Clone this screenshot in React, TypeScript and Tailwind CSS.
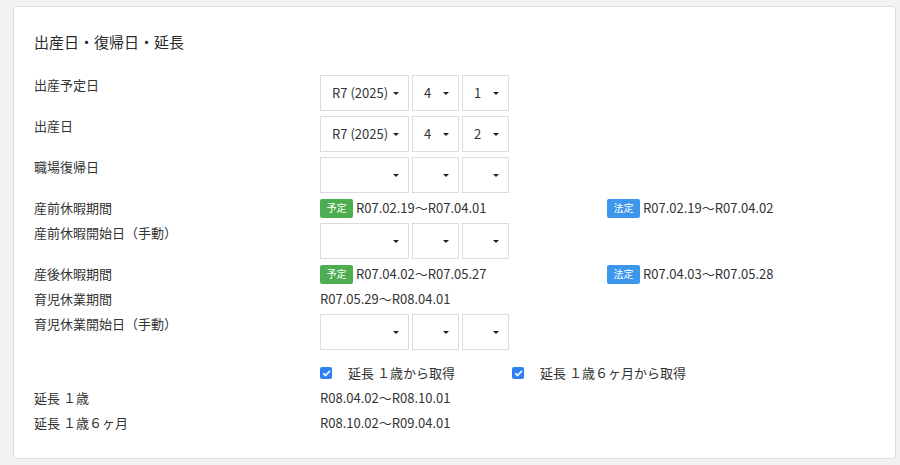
import React from "react";

const Arrow = () => (
  <svg width="6" height="3" viewBox="0 0 6 3" className="shrink-0">
    <path d="M0 0 L6 0 L3 3 Z" fill="#222" />
  </svg>
);

const Sel = ({ w, v }: { w: string; v?: string }) => (
  <div
    className={`${w} h-[36px] border border-[#dcdcdc] bg-white flex items-center justify-between pl-[11px] pr-[9px] text-[13px] text-[#333]`}
  >
    <span>{v ?? ""}</span>
    <Arrow />
  </div>
);

const DateSel = ({ y, m, d }: { y?: string; m?: string; d?: string }) => (
  <div className="flex gap-[3px]">
    <Sel w="w-[89px]" v={y} />
    <Sel w="w-[47px]" v={m} />
    <Sel w="w-[47px]" v={d} />
  </div>
);

const Badge = ({ kind }: { kind: "yotei" | "hotei" }) => (
  <span
    className={`inline-flex items-center justify-center w-[33px] h-[19px] rounded-[2px] text-white text-[10px] leading-none mr-[3px] ${
      kind === "yotei" ? "bg-[#4cae50]" : "bg-[#3a97ec]"
    }`}
  >
    {kind === "yotei" ? "予定" : "法定"}
  </span>
);

const Row = ({ label, children, className = "" }: { label: string; children?: React.ReactNode; className?: string }) => (
  <div className={`flex items-start ${className}`}>
    <div className="w-[286px] shrink-0 h-[20px] leading-[20px]">{label}</div>
    <div className="flex-1">{children}</div>
  </div>
);

const Period = ({ a, b }: { a: string; b: string }) => (
  <div className="flex items-center h-[20px]">
    <div className="w-[287px] flex items-center">
      <Badge kind="yotei" />
      <span>{a}</span>
    </div>
    <div className="flex items-center">
      <Badge kind="hotei" />
      <span>{b}</span>
    </div>
  </div>
);

const Check = ({ label, w }: { label: string; w: string }) => (
  <label className={`flex items-center ${w}`}>
    <span className="w-[12px] h-[12px] rounded-[2px] bg-[#2f7ff5] flex items-center justify-center mr-[16px]">
      <svg width="9" height="9" viewBox="0 0 10 10">
        <path d="M1.8 5.2 L4 7.3 L8.3 2.6" stroke="white" strokeWidth="1.8" fill="none" strokeLinecap="round" strokeLinejoin="round" />
      </svg>
    </span>
    <span>{label}</span>
  </label>
);

export default function App() {
  return (
    <div
      className="w-[900px] h-[465px] bg-[#f2f2f2] pl-[13px] pr-[4px] pt-[6px]"
      style={{ fontFamily: '"Noto Sans CJK JP", "Noto Sans", sans-serif' }}
    >
      <div className="h-[453px] bg-white border border-[#dedede] rounded-[3px] px-[20px] pt-[24px] text-[13px] text-[#333]">
        <div className="text-[15px] leading-[22px] text-[#2a2a2a] mb-[22px]">出産日・復帰日・延長</div>
        <div className="flex flex-col gap-[5px]">
          <Row label="出産予定日">
            <DateSel y="R7 (2025)" m="4" d="1" />
          </Row>
          <Row label="出産日">
            <DateSel y="R7 (2025)" m="4" d="2" />
          </Row>
          <Row label="職場復帰日">
            <DateSel />
          </Row>
          <Row label="産前休暇期間">
            <Period a="R07.02.19〜R07.04.01" b="R07.02.19〜R07.04.02" />
          </Row>
          <Row label="産前休暇開始日（手動）">
            <DateSel />
          </Row>
          <Row label="産後休暇期間">
            <Period a="R07.04.02〜R07.05.27" b="R07.04.03〜R07.05.28" />
          </Row>
          <Row label="育児休業期間">
            <div className="h-[20px] leading-[20px]">R07.05.29〜R08.04.01</div>
          </Row>
          <Row label="育児休業開始日（手動）">
            <DateSel />
          </Row>
          <Row label="" className="mt-[8px]">
            <div className="flex items-center h-[20px]">
              <Check label="延長 １歳から取得" w="w-[192px]" />
              <Check label="延長 １歳６ヶ月から取得" w="" />
            </div>
          </Row>
          <Row label="延長 １歳">
            <div className="h-[20px] leading-[20px]">R08.04.02〜R08.10.01</div>
          </Row>
          <Row label="延長 １歳６ヶ月">
            <div className="h-[20px] leading-[20px]">R08.10.02〜R09.04.01</div>
          </Row>
        </div>
      </div>
    </div>
  );
}
